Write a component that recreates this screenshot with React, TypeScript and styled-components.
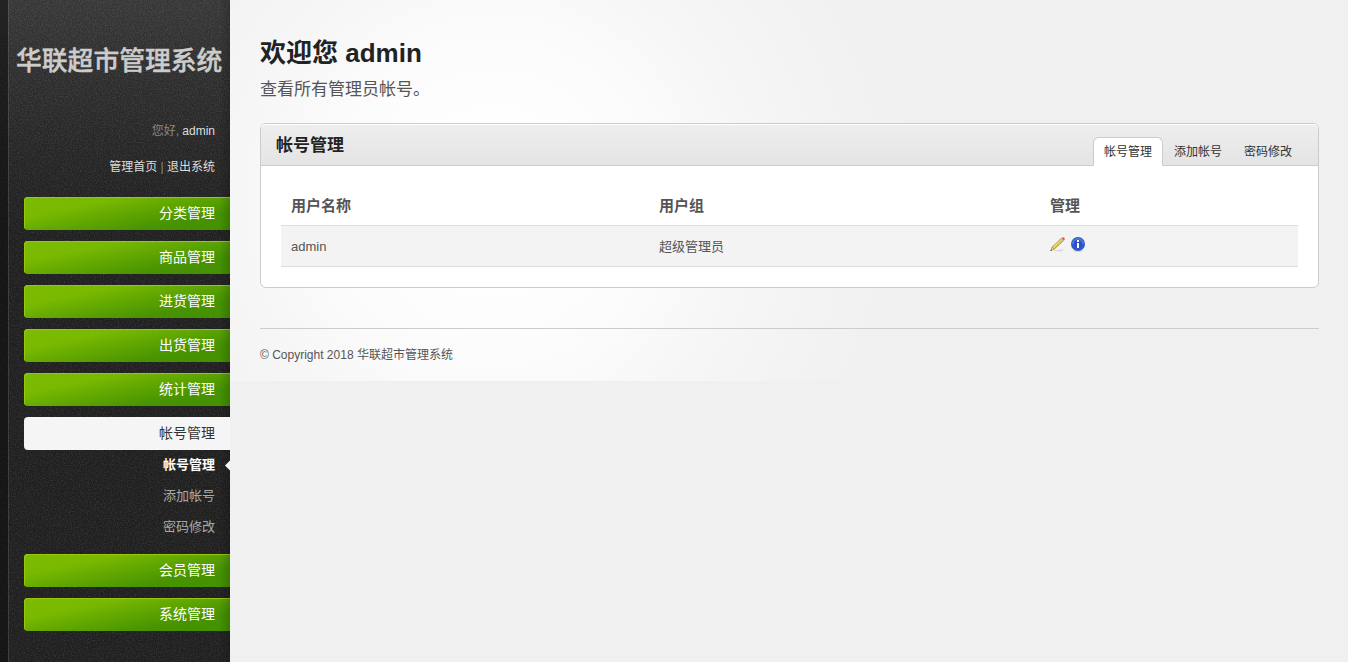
import React from 'react';
import styled, { createGlobalStyle, css } from 'styled-components';

const GlobalStyle = createGlobalStyle`
  * { box-sizing: border-box; }
  body {
    margin: 0;
    background: #f0f0f0;
    color: #555;
    font-family: "Liberation Sans", "Noto Sans CJK SC", sans-serif;
    font-size: 12px;
  }
  h1, h2, p, ul { margin: 0; padding: 0; }
  ul { list-style: none; }
  a { text-decoration: none; color: inherit; }
`;

const Page = styled.div`
  display: flex;
  height: 662px;
  overflow: hidden;
`;

const Sidebar = styled.aside`
  position: relative;
  width: 230px;
  flex: none;
  background: linear-gradient(#404040 0, #363636 70px, #2b2b2b 160px, #242424 240px);
`;

const Grain = styled.svg`
  position: absolute;
  inset: 0;
  width: 230px;
  height: 662px;
`;

const SideInner = styled.div`
  position: relative;
  height: 100%;
  display: flex;
  flex-direction: column;
  border-left: 8px solid rgba(10, 10, 10, 0.5);
  box-shadow: inset 1px 0 rgba(255, 255, 255, 0.12);
`;

const EdgeShade = styled.div`
  position: absolute;
  top: 0;
  right: 0;
  bottom: 0;
  width: 11px;
  background: linear-gradient(90deg, transparent, rgba(0, 0, 0, 0.17));
  pointer-events: none;
`;

const Logo = styled.div`
  margin: 41px 0 0 8px;
  height: 40px;
  line-height: 40px;
  font-size: 25.8px;
  font-weight: 500;
  -webkit-text-stroke: 0.4px #ccc;
  color: #ccc;
  white-space: nowrap;
`;

const Profile = styled.div`
  margin-top: 41px;
  padding-right: 15px;
  height: 75px;
  text-align: right;
  line-height: 18px;
  color: #888;
  a { color: #ddd; }
  p + p { margin-top: 18px; }
`;

const Menu = styled.ul`
  padding-left: 16px;
`;

const MenuItem = styled.li`
  margin-bottom: 11px;
`;

const MenuLink = styled.a<{ $current?: boolean }>`
  display: block;
  height: 33px;
  padding-right: 15px;
  line-height: 32px;
  text-align: right;
  font-size: 14px;
  color: #fff;
  border-radius: 4px 0 0 4px;
  background: linear-gradient(168deg, #7cbb00 0%, #79b900 27%, #5fa501 52%, #479301 75%, #439001 100%);
  box-shadow: inset 1px 1px #97c90a;
  ${p => p.$current && css`
    position: relative;
    z-index: 1;
    color: #333;
    background: #f5f5f5;
    box-shadow: none;
  `}
`;

const SubMenu = styled.ul`
  height: 93px;
`;

const SubItem = styled.li<{ $current?: boolean }>`
  position: relative;
  height: 31px;
  padding-right: 15px;
  line-height: 29px;
  text-align: right;
  font-size: 13px;
  color: ${p => (p.$current ? '#fff' : '#aaa')};
  font-weight: ${p => (p.$current ? 700 : 400)};
`;

const Pointer = styled.svg`
  position: absolute;
  right: 0;
  top: 10px;
  z-index: 1;
`;

const Main = styled.main`
  flex: 1;
  height: 381px;
  padding: 35px 29px 0 30px;
  background: radial-gradient(circle at 263px 202px, #fff 0, #fefefe 80px, #fbfbfb 172px, #f6f6f6 260px, #f3f3f3 330px, #f1f1f1 390px, #f0f0f0 440px);
`;

const Title = styled.h1`
  font-size: 26px;
  line-height: 36px;
  color: #222;
`;

const Intro = styled.p`
  margin-top: 7px;
  font-size: 17px;
  line-height: 24px;
`;

const Box = styled.section`
  margin-top: 21px;
  height: 165px;
  border: 1px solid #ccc;
  border-radius: 6px;
  background: #fff;
`;

const BoxHeader = styled.header`
  height: 42px;
  display: flex;
  justify-content: space-between;
  padding: 0 15px;
  border-bottom: 1px solid #ccc;
  border-radius: 5px 5px 0 0;
  background: linear-gradient(#eee, #e4e4e4);
  box-shadow: inset 0 1px #fff;
`;

const BoxTitle = styled.h2`
  font-size: 17px;
  line-height: 44px;
  color: #222;
`;

const Tabs = styled.nav`
  display: flex;
  margin-top: 13px;
`;

const Tab = styled.a<{ $current?: boolean }>`
  height: 29px;
  width: 70px;
  line-height: 29px;
  text-align: center;
  font-size: 12px;
  color: #333;
  border: 1px solid transparent;
  border-bottom: 0;
  border-radius: 6px 6px 0 0;
  ${p => p.$current && css`
    background: #fff;
    border-color: #ccc;
  `}
`;

const Table = styled.div`
  margin: 20px 20px 0;
`;

const Row = styled.div<{ $head?: boolean }>`
  display: grid;
  grid-template-columns: 368px 391px 1fr;
  padding: 0 10px;
  height: 42px;
  align-items: center;
  font-size: 13px;
  line-height: 20px;
  ${p => p.$head ? css`
    height: 39px;
    font-size: 15px;
    font-weight: 700;
  ` : css`
    padding-top: 1px;
    background: #f3f3f3;
    border: solid #ddd;
    border-width: 1px 0;
  `}
`;

const Cell = styled.span`
  padding-top: 1px;
`;

const Actions = styled.span`
  display: flex;
  gap: 4px;
  margin-top: -6px;
`;

const Footer = styled.footer`
  margin-top: 40px;
  padding-top: 17px;
  border-top: 1px solid #ccc;
  line-height: 18px;
`;

const Pencil = () => (
  <svg width="16" height="16" viewBox="0 0 17 16">
    <path d="M2 15.4 L11 14.4 L15 13.4 L12 15.7 Z" fill="#cfcfcf" />
    <path d="M0.5 15.4 L2 11.2 L12 1.7 L14.7 4.3 L4.5 13.8 Z" fill="#8b7420" />
    <path d="M2.5 11.8 L11.7 2.9 L13.5 4.6 L4.2 13.2 Z" fill="#e6cf4c" />
    <path d="M3 11.6 L11.6 3.4" stroke="#fff3a0" strokeWidth="0.8" />
    <path d="M0.8 15.2 L2.2 12 L4 13.7 Z" fill="#efd5ab" />
    <path d="M0.5 15.4 L1.2 13.7 L2.2 14.7 Z" fill="#222" />
    <path d="M11 2.8 L12.2 1.7 L14.7 4.1 L13.5 5.2 Z" fill="#c8c8d0" />
    <path d="M12.2 1.8 Q13.7 0 15.3 1.4 Q16.6 2.8 14.8 4.2 Z" fill="#e35a5a" />
  </svg>
);

const Info = () => (
  <svg width="16" height="16" viewBox="0 0 16 16">
    <ellipse cx="8" cy="15" rx="5" ry="0.8" fill="#cdcdd4" />
    <circle cx="8" cy="8" r="7" fill="#3158bd" />
    <circle cx="8" cy="8" r="6" fill="#2f5ad2" />
    <path d="M2 8a6 6 0 0 1 12 0z" fill="#4f79dc" />
    <circle cx="8" cy="8" r="4.2" fill="#2a52c4" />
    <path d="M7 4h2v2H7zM7 7h2v5H7z" fill="#fff" />
  </svg>
);

const before = ['分类管理', '商品管理', '进货管理', '出货管理', '统计管理'];
const after = ['会员管理', '系统管理'];

export default function App() {
  return (
    <Page>
      <GlobalStyle />
      <Sidebar>
        <Grain aria-hidden="true">
          <filter id="grain" x="0" y="0" width="100%" height="100%" colorInterpolationFilters="sRGB">
            <feTurbulence type="fractalNoise" baseFrequency="0.87" numOctaves="2" seed="4" />
            <feColorMatrix values="1.4 0 0 0 -0.56  1.4 0 0 0 -0.56  1.4 0 0 0 -0.56  0 0 0 0 0.15" />
          </filter>
          <rect width="230" height="662" filter="url(#grain)" />
        </Grain>
        <SideInner>
          <Logo>华联超市管理系统</Logo>
          <Profile>
            <p>您好, <a href="#">admin</a></p>
            <p><a href="#">管理首页</a> | <a href="#">退出系统</a></p>
          </Profile>
          <Menu>
            {before.map(name => (
              <MenuItem key={name}><MenuLink href="#">{name}</MenuLink></MenuItem>
            ))}
            <MenuItem>
              <MenuLink href="#" $current>帐号管理</MenuLink>
              <SubMenu>
                <SubItem $current>
                  帐号管理
                  <Pointer width="5" height="11" viewBox="0 0 5 11"><path d="M5 0.5V10.5L0 5.5z" fill="#f5f5f5" /></Pointer>
                </SubItem>
                <SubItem>添加帐号</SubItem>
                <SubItem>密码修改</SubItem>
              </SubMenu>
            </MenuItem>
            {after.map(name => (
              <MenuItem key={name}><MenuLink href="#">{name}</MenuLink></MenuItem>
            ))}
          </Menu>
          <EdgeShade />
        </SideInner>
      </Sidebar>
      <Main>
        <Title>欢迎您 admin</Title>
        <Intro>查看所有管理员帐号。</Intro>
        <Box>
          <BoxHeader>
            <BoxTitle>帐号管理</BoxTitle>
            <Tabs>
              <Tab href="#" $current>帐号管理</Tab>
              <Tab href="#">添加帐号</Tab>
              <Tab href="#">密码修改</Tab>
            </Tabs>
          </BoxHeader>
          <Table>
            <Row $head>
              <Cell>用户名称</Cell>
              <Cell>用户组</Cell>
              <Cell>管理</Cell>
            </Row>
            <Row>
              <Cell>admin</Cell>
              <Cell>超级管理员</Cell>
              <Actions><Pencil /><Info /></Actions>
            </Row>
          </Table>
        </Box>
        <Footer>© Copyright 2018 华联超市管理系统</Footer>
      </Main>
    </Page>
  );
}
